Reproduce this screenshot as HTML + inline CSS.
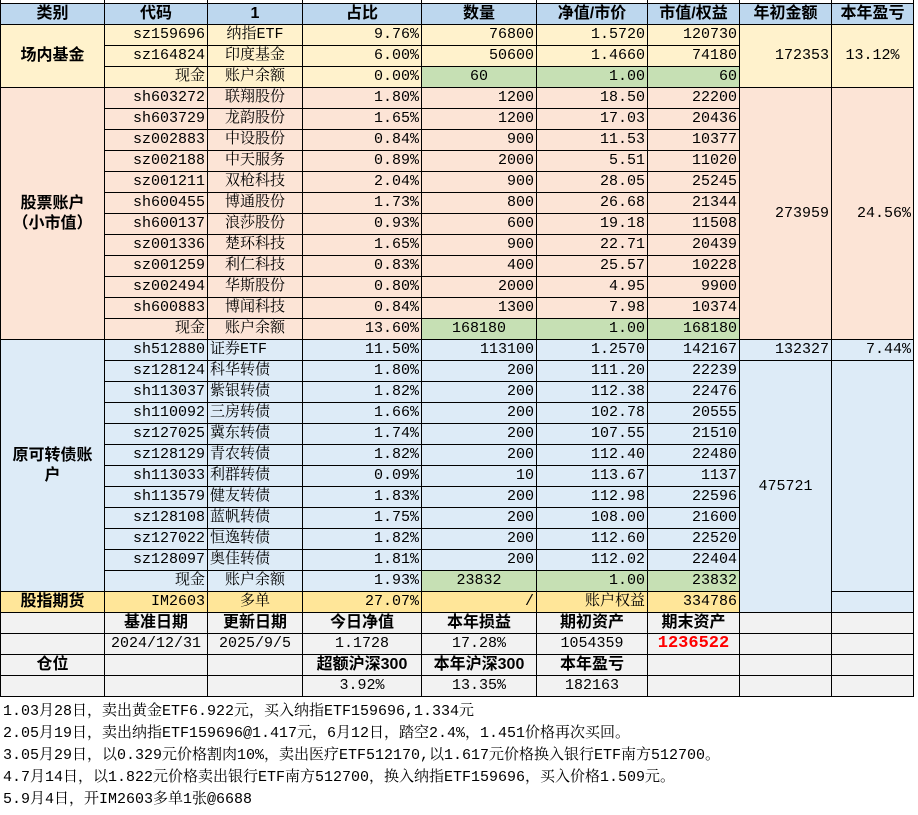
<!DOCTYPE html>
<html><head><meta charset="utf-8"><style>
body{margin:0;background:#fff;width:918px;height:815px;overflow:hidden;font-family:"Liberation Sans","Noto Sans CJK SC",sans-serif;}
table{position:absolute;left:0;top:-18px;width:918px;border-collapse:collapse;table-layout:fixed;font-size:15px;}
td{border:1px solid #000;height:20px;padding:0 2px;white-space:nowrap;overflow:hidden;line-height:20px;font-family:"Liberation Mono","Noto Serif CJK SC",monospace;}
tr{height:21px}
.h td{background:#bdd7ee;font-weight:bold;text-align:center;font-family:"Liberation Sans","Noto Sans CJK SC",sans-serif;font-size:16px}
.r{text-align:right}.c{text-align:center}
.b{font-weight:bold;text-align:center;font-family:"Liberation Sans","Noto Sans CJK SC",sans-serif;font-size:16px}
.y td{background:#fff2cc}.p td{background:#fce4d6}.bl td{background:#ddebf7}
td.g{background:#c6e0b4}.f td{background:#ffe699}.gr td{background:#f2f2f2}
td.w{background:#fff;border-top:none;border-bottom:none;border-right:none}
.notes{position:absolute;left:3px;top:701px;font-size:15px;line-height:22px;font-family:"Liberation Mono","Noto Serif CJK SC",monospace;white-space:nowrap}
</style></head><body>
<table>
<colgroup><col style="width:104px"><col style="width:103px"><col style="width:95px"><col style="width:119px"><col style="width:115px"><col style="width:111px"><col style="width:92px"><col style="width:92px"><col style="width:82px"><col style="width:5px"></colgroup>
<tr><td></td><td></td><td></td><td></td><td></td><td></td><td></td><td></td><td></td><td class="w"></td></tr>
<tr class="h"><td>类别</td><td>代码</td><td>1</td><td>占比</td><td>数量</td><td>净值/市价</td><td>市值/权益</td><td>年初金额</td><td>本年盈亏</td><td class="w" style="background:#fff"></td></tr>
<tr class="y"><td rowspan="3" class="b">场内基金</td><td class="r">sz159696</td><td class="c">纳指ETF</td><td class="r">9.76%</td><td class="r">76800</td><td class="r">1.5720</td><td class="r">120730</td><td rowspan="3" class="r">172353</td><td rowspan="3" class="c">13.12%</td><td class="w"></td></tr>
<tr class="y"><td class="r">sz164824</td><td class="c">印度基金</td><td class="r">6.00%</td><td class="r">50600</td><td class="r">1.4660</td><td class="r">74180</td><td class="w"></td></tr>
<tr class="y"><td class="r">现金</td><td class="c">账户余额</td><td class="r">0.00%</td><td class="c g">60</td><td class="r g">1.00</td><td class="r g">60</td><td class="w"></td></tr>
<tr class="p"><td rowspan="12" class="b">股票账户<br>（小市值）</td><td class="r">sh603272</td><td class="c">联翔股份</td><td class="r">1.80%</td><td class="r">1200</td><td class="r">18.50</td><td class="r">22200</td><td rowspan="12" class="r">273959</td><td rowspan="12" class="r">24.56%</td><td class="w"></td></tr>
<tr class="p"><td class="r">sh603729</td><td class="c">龙韵股份</td><td class="r">1.65%</td><td class="r">1200</td><td class="r">17.03</td><td class="r">20436</td><td class="w"></td></tr>
<tr class="p"><td class="r">sz002883</td><td class="c">中设股份</td><td class="r">0.84%</td><td class="r">900</td><td class="r">11.53</td><td class="r">10377</td><td class="w"></td></tr>
<tr class="p"><td class="r">sz002188</td><td class="c">中天服务</td><td class="r">0.89%</td><td class="r">2000</td><td class="r">5.51</td><td class="r">11020</td><td class="w"></td></tr>
<tr class="p"><td class="r">sz001211</td><td class="c">双枪科技</td><td class="r">2.04%</td><td class="r">900</td><td class="r">28.05</td><td class="r">25245</td><td class="w"></td></tr>
<tr class="p"><td class="r">sh600455</td><td class="c">博通股份</td><td class="r">1.73%</td><td class="r">800</td><td class="r">26.68</td><td class="r">21344</td><td class="w"></td></tr>
<tr class="p"><td class="r">sh600137</td><td class="c">浪莎股份</td><td class="r">0.93%</td><td class="r">600</td><td class="r">19.18</td><td class="r">11508</td><td class="w"></td></tr>
<tr class="p"><td class="r">sz001336</td><td class="c">楚环科技</td><td class="r">1.65%</td><td class="r">900</td><td class="r">22.71</td><td class="r">20439</td><td class="w"></td></tr>
<tr class="p"><td class="r">sz001259</td><td class="c">利仁科技</td><td class="r">0.83%</td><td class="r">400</td><td class="r">25.57</td><td class="r">10228</td><td class="w"></td></tr>
<tr class="p"><td class="r">sz002494</td><td class="c">华斯股份</td><td class="r">0.80%</td><td class="r">2000</td><td class="r">4.95</td><td class="r">9900</td><td class="w"></td></tr>
<tr class="p"><td class="r">sh600883</td><td class="c">博闻科技</td><td class="r">0.84%</td><td class="r">1300</td><td class="r">7.98</td><td class="r">10374</td><td class="w"></td></tr>
<tr class="p"><td class="r">现金</td><td class="c">账户余额</td><td class="r">13.60%</td><td class="c g">168180</td><td class="r g">1.00</td><td class="r g">168180</td><td class="w"></td></tr>
<tr class="bl"><td rowspan="12" class="b">原可转债账<br>户</td><td class="r">sh512880</td><td>证券ETF</td><td class="r">11.50%</td><td class="r">113100</td><td class="r">1.2570</td><td class="r">142167</td><td class="r">132327</td><td class="r">7.44%</td><td class="w"></td></tr>
<tr class="bl"><td class="r">sz128124</td><td>科华转债</td><td class="r">1.80%</td><td class="r">200</td><td class="r">111.20</td><td class="r">22239</td><td rowspan="12" class="c">475721</td><td rowspan="11"></td><td class="w"></td></tr>
<tr class="bl"><td class="r">sh113037</td><td>紫银转债</td><td class="r">1.82%</td><td class="r">200</td><td class="r">112.38</td><td class="r">22476</td><td class="w"></td></tr>
<tr class="bl"><td class="r">sh110092</td><td>三房转债</td><td class="r">1.66%</td><td class="r">200</td><td class="r">102.78</td><td class="r">20555</td><td class="w"></td></tr>
<tr class="bl"><td class="r">sz127025</td><td>冀东转债</td><td class="r">1.74%</td><td class="r">200</td><td class="r">107.55</td><td class="r">21510</td><td class="w"></td></tr>
<tr class="bl"><td class="r">sz128129</td><td>青农转债</td><td class="r">1.82%</td><td class="r">200</td><td class="r">112.40</td><td class="r">22480</td><td class="w"></td></tr>
<tr class="bl"><td class="r">sh113033</td><td>利群转债</td><td class="r">0.09%</td><td class="r">10</td><td class="r">113.67</td><td class="r">1137</td><td class="w"></td></tr>
<tr class="bl"><td class="r">sh113579</td><td>健友转债</td><td class="r">1.83%</td><td class="r">200</td><td class="r">112.98</td><td class="r">22596</td><td class="w"></td></tr>
<tr class="bl"><td class="r">sz128108</td><td>蓝帆转债</td><td class="r">1.75%</td><td class="r">200</td><td class="r">108.00</td><td class="r">21600</td><td class="w"></td></tr>
<tr class="bl"><td class="r">sz127022</td><td>恒逸转债</td><td class="r">1.82%</td><td class="r">200</td><td class="r">112.60</td><td class="r">22520</td><td class="w"></td></tr>
<tr class="bl"><td class="r">sz128097</td><td>奥佳转债</td><td class="r">1.81%</td><td class="r">200</td><td class="r">112.02</td><td class="r">22404</td><td class="w"></td></tr>
<tr class="bl"><td class="r">现金</td><td class="c">账户余额</td><td class="r">1.93%</td><td class="c g">23832</td><td class="r g">1.00</td><td class="r g">23832</td><td class="w"></td></tr>
<tr class="f"><td class="b">股指期货</td><td class="r">IM2603</td><td class="c">多单</td><td class="r">27.07%</td><td class="r">/</td><td class="r">账户权益</td><td class="r">334786</td><td style="background:#ddebf7"></td><td class="w"></td></tr>
<tr class="gr"><td></td><td class="b">基准日期</td><td class="b">更新日期</td><td class="b">今日净值</td><td class="b">本年损益</td><td class="b">期初资产</td><td class="b">期末资产</td><td></td><td></td><td class="w"></td></tr>
<tr class="gr"><td></td><td class="c">2024/12/31</td><td class="c">2025/9/5</td><td class="c">1.1728</td><td class="c">17.28%</td><td class="c">1054359</td><td class="c" style="color:#f00;font-weight:bold;font-size:17px">1236522</td><td></td><td></td><td class="w"></td></tr>
<tr class="gr"><td class="b">仓位</td><td></td><td></td><td class="b">超额沪深300</td><td class="b">本年沪深300</td><td class="b">本年盈亏</td><td></td><td></td><td></td><td class="w"></td></tr>
<tr class="gr"><td></td><td></td><td></td><td class="c">3.92%</td><td class="c">13.35%</td><td class="c">182163</td><td></td><td></td><td></td><td class="w"></td></tr>
</table>
<div class="notes">
1.03月28日，卖出黄金ETF6.922元，买入纳指ETF159696,1.334元<br>
2.05月19日，卖出纳指ETF159696@1.417元，6月12日，踏空2.4%，1.451价格再次买回。<br>
3.05月29日，以0.329元价格割肉10%，卖出医疗ETF512170,以1.617元价格换入银行ETF南方512700。<br>
4.7月14日，以1.822元价格卖出银行ETF南方512700，换入纳指ETF159696，买入价格1.509元。<br>
5.9月4日，开IM2603多单1张@6688
</div>
</body></html>
